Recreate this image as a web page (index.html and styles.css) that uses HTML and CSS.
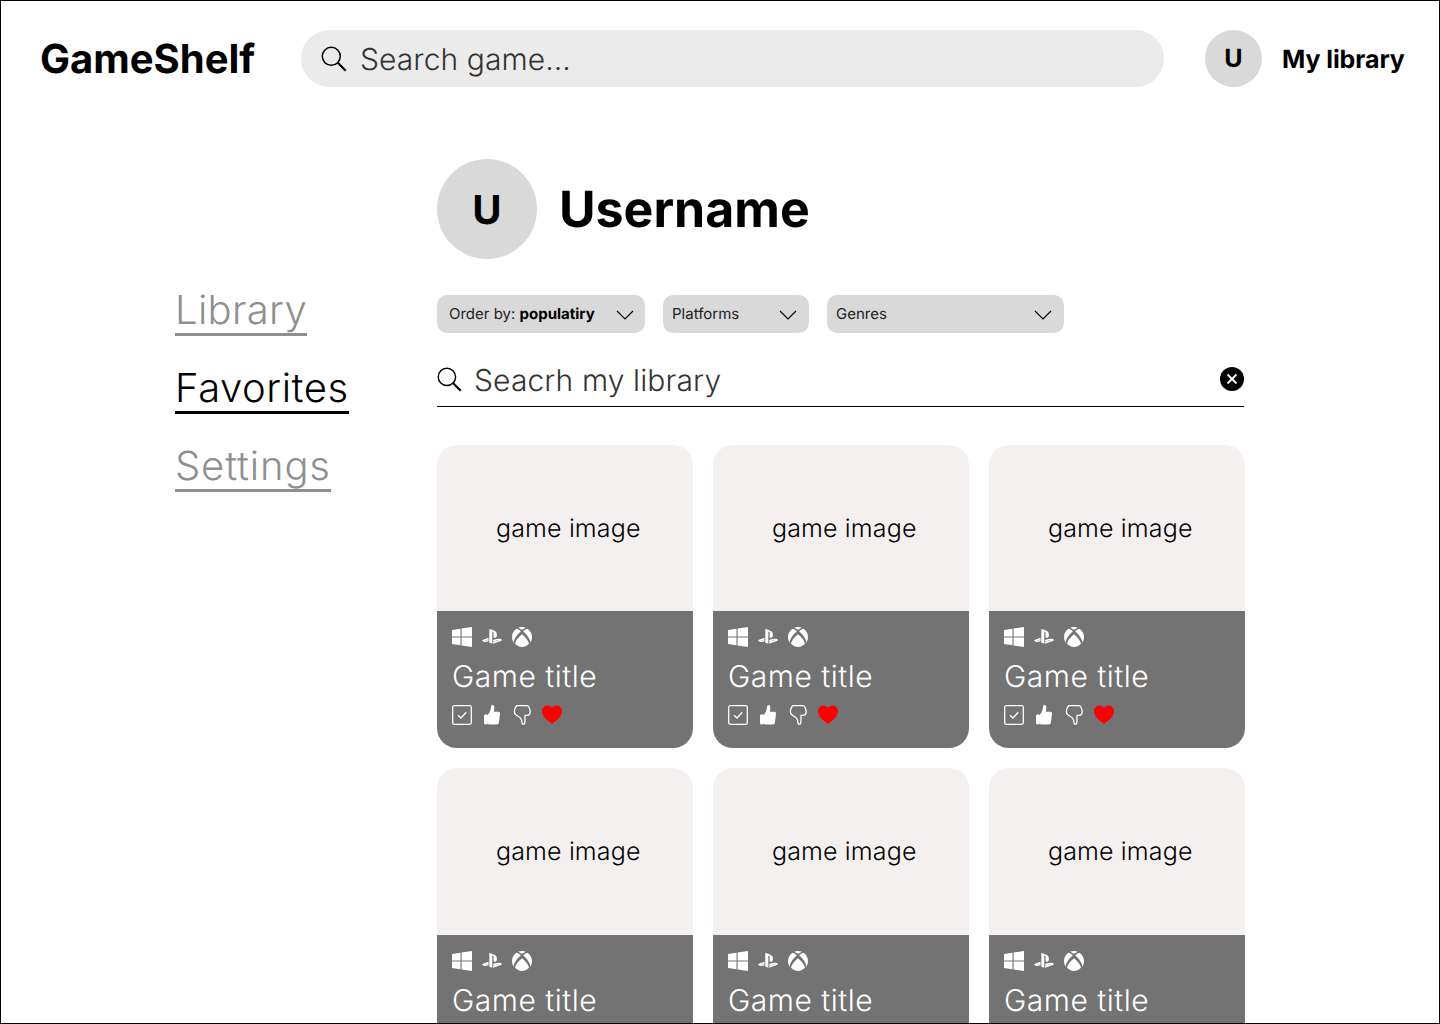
FILE: index.html
```html
<!DOCTYPE html>
<html lang="en">
<head>
<meta charset="utf-8">
<title>GameShelf</title>
<link rel="stylesheet" href="styles.css">
</head>
<body>
<svg class="defs" width="0" height="0" aria-hidden="true">
  <defs>
    <symbol id="i-search" viewBox="0 0 26 26"><circle cx="10.300" cy="10.300" r="9" fill="none" stroke="currentColor" stroke-width="1.500"/><path d="M16.800 16.800 24.700 24.700" fill="none" stroke="currentColor" stroke-width="2.200"/></symbol>
    <symbol id="i-chev" viewBox="0 0 18 10"><path d="M1 1 9 9 17 1" fill="none" stroke="currentColor" stroke-width="1.100"/></symbol>
    <symbol id="i-win" viewBox="0 0 20 20"><path d="M0 3 8.500 1.700V9.400H0ZM9.600 1.500 20 0V9.400H9.600ZM0 10.600H8.500V18.300L0 17ZM9.600 10.600H20V20L9.600 18.500Z" fill="#fff"/></symbol>
    <symbol id="i-ps" viewBox="0 0 20 20"><path d="M7.300 1.800V15.800L10.300 16.800V5.200C10.300 4.600 10.600 4.300 11 4.400 11.500 4.600 11.600 5.100 11.600 5.600V10.400C13.500 11.300 14.900 10.400 14.900 7.900 14.900 5.300 14 4.200 11.700 3.400 10.500 3 8.600 2.300 7.300 1.800ZM6.500 10.800 1.600 12.600C0 13.200-.2 14.200 1.100 14.600 2.400 15.100 4.100 15.100 6.500 14.300V12.800L3.700 13.800C3.200 14 2.900 13.700 3.400 13.500L6.500 12.400ZM11.200 13.100V14.700L15.900 13C16.400 12.800 16.700 13.100 16.200 13.300L11.200 15.100V16.700L18.800 14C20.400 13.400 20.200 12.500 18.700 12.100 16.500 11.500 13.800 12.100 11.200 13.100Z" fill="#fff"/></symbol>
    <symbol id="i-xbox" viewBox="0 0 20 20"><path d="M10 2.700C8.700 1.900 7.400 1.400 6.200.8 7.300.3 8.600 0 10 0S12.700.3 13.800.8C12.600 1.400 11.300 1.900 10 2.700ZM4.600 1.700C6.300 2.100 7.700 3.300 8.900 4.300 6.200 6.600 3.400 9.900 2.100 13.200 1.700 15 1.800 15.800 2.200 16.300.8 14.600 0 12.400 0 10 0 6.700 1.800 3.500 4.600 1.700ZM15.400 1.700C18.200 3.500 20 6.700 20 10 20 12.400 19.200 14.600 17.800 16.300 18.200 15.800 18.300 15 17.900 13.200 16.600 9.900 13.800 6.600 11.100 4.300 12.300 3.300 13.700 2.100 15.400 1.700ZM10 7.300C12.900 9.500 16.700 14 17 16.800 15.200 18.800 12.700 20 10 20S4.800 18.800 3 16.800C3.300 14 7.100 9.500 10 7.300Z" fill="#fff"/></symbol>
    <symbol id="i-check" viewBox="0 0 20 20"><rect x=".7" y=".7" width="18.600" height="18.600" rx="1.500" fill="none" stroke="#fff" stroke-width="1.300"/><path d="M6 10.200 9 13 14.200 7.200" fill="none" stroke="#fff" stroke-width="1.300"/></symbol>
    <symbol id="i-up" viewBox="0 0 20 20"><path d="M10.500 0C11.900 0 12.500 1.300 12.300 3L11.900 6.800H16.200C17.500 6.800 18.200 7.800 18 9L16.900 17.500C16.700 18.800 15.900 19.500 14.700 19.500H7.300C6.500 19.500 6 19.300 5.500 18.800 5 19.200 4.500 19.500 3.800 19.500 2.700 19.500 2 18.800 2 17.700V11.300C2 10 2.700 9.300 3.900 9.300 4.600 9.300 5.200 9.600 5.600 10.100 7 8.500 8.300 6.500 8.700 3.800 8.900 1.700 9.200 0 10.500 0Z" fill="#fff"/></symbol>
    <symbol id="i-down" viewBox="0 0 20 20"><path d="M5 .7H14.900C15.900.7 16.400 1.200 16.800 2 17.300 2.900 18.200 4.500 18.200 6.400 18.200 9 16.800 10.300 14.600 10.300H13L12.900 17.500C12.900 18.700 12.200 19.300 11.300 19.300 10.400 19.300 9.900 18.700 9.900 17.500 9.900 14.300 8.500 12.600 6.500 11.500 4 10.300 2.400 9 2.400 6.400 2.400 4.900 3.500 1.400 5 .7Z" fill="none" stroke="#fff" stroke-width="1.300"/></symbol>
    <symbol id="i-heart" viewBox="0 0 20 20"><path d="M10 18.800C7 16.600 0 12 0 6.200 0 2.900 2.400.4 5.400.4 7.300.4 9 1.400 10 3 11 1.400 12.700.4 14.600.4 17.600.4 20 2.900 20 6.200 20 12 13 16.600 10 18.800Z" fill="#f00"/></symbol>
  </defs>
</svg>
<div class="frame">
  <header class="topbar">
    <div class="logo">GameShelf</div>
    <div class="global-search">
      <svg class="icon-search"><use href="#i-search"/></svg>
      <span class="global-search-text">Search game...</span>
    </div>
    <div class="avatar avatar-small">U</div>
    <div class="library-link">My library</div>
  </header>

  <div class="layout">
    <nav class="sidenav">
      <a class="nav-item nav-library">Library</a>
      <a class="nav-item nav-active">Favorites</a>
      <a class="nav-item nav-settings">Settings</a>
    </nav>

    <main class="content">
      <section class="profile">
        <div class="avatar avatar-large">U</div>
        <h1 class="username">Username</h1>
      </section>

      <section class="filters">
        <div class="filter filter-order"><span>Order by: <b>populatiry</b></span><svg class="chev"><use href="#i-chev"/></svg></div>
        <div class="filter filter-platforms"><span>Platforms</span><svg class="chev"><use href="#i-chev"/></svg></div>
        <div class="filter filter-genres"><span>Genres</span><svg class="chev"><use href="#i-chev"/></svg></div>
      </section>

      <section class="library-search">
        <svg class="icon-search"><use href="#i-search"/></svg>
        <span class="library-search-text">Seacrh my library</span>
        <svg class="clear" viewBox="0 0 24 24"><circle cx="12" cy="12" r="12" fill="#000"/><path d="M7.500 7.500 16.500 16.500M16.500 7.500 7.500 16.500" stroke="#fff" stroke-width="1.800"/></svg>
      </section>

      <section class="grid">
        <article class="card">
          <div class="card-image"><span>game image</span></div>
          <div class="card-body">
            <div class="icons"><svg><use href="#i-win"/></svg><svg><use href="#i-ps"/></svg><svg><use href="#i-xbox"/></svg></div>
            <div class="card-title">Game title</div>
            <div class="icons"><svg><use href="#i-check"/></svg><svg><use href="#i-up"/></svg><svg><use href="#i-down"/></svg><svg><use href="#i-heart"/></svg></div>
          </div>
        </article>
        <article class="card">
          <div class="card-image"><span>game image</span></div>
          <div class="card-body">
            <div class="icons"><svg><use href="#i-win"/></svg><svg><use href="#i-ps"/></svg><svg><use href="#i-xbox"/></svg></div>
            <div class="card-title">Game title</div>
            <div class="icons"><svg><use href="#i-check"/></svg><svg><use href="#i-up"/></svg><svg><use href="#i-down"/></svg><svg><use href="#i-heart"/></svg></div>
          </div>
        </article>
        <article class="card">
          <div class="card-image"><span>game image</span></div>
          <div class="card-body">
            <div class="icons"><svg><use href="#i-win"/></svg><svg><use href="#i-ps"/></svg><svg><use href="#i-xbox"/></svg></div>
            <div class="card-title">Game title</div>
            <div class="icons"><svg><use href="#i-check"/></svg><svg><use href="#i-up"/></svg><svg><use href="#i-down"/></svg><svg><use href="#i-heart"/></svg></div>
          </div>
        </article>
        <article class="card">
          <div class="card-image"><span>game image</span></div>
          <div class="card-body">
            <div class="icons"><svg><use href="#i-win"/></svg><svg><use href="#i-ps"/></svg><svg><use href="#i-xbox"/></svg></div>
            <div class="card-title">Game title</div>
            <div class="icons"><svg><use href="#i-check"/></svg><svg><use href="#i-up"/></svg><svg><use href="#i-down"/></svg><svg><use href="#i-heart"/></svg></div>
          </div>
        </article>
        <article class="card">
          <div class="card-image"><span>game image</span></div>
          <div class="card-body">
            <div class="icons"><svg><use href="#i-win"/></svg><svg><use href="#i-ps"/></svg><svg><use href="#i-xbox"/></svg></div>
            <div class="card-title">Game title</div>
            <div class="icons"><svg><use href="#i-check"/></svg><svg><use href="#i-up"/></svg><svg><use href="#i-down"/></svg><svg><use href="#i-heart"/></svg></div>
          </div>
        </article>
        <article class="card">
          <div class="card-image"><span>game image</span></div>
          <div class="card-body">
            <div class="icons"><svg><use href="#i-win"/></svg><svg><use href="#i-ps"/></svg><svg><use href="#i-xbox"/></svg></div>
            <div class="card-title">Game title</div>
            <div class="icons"><svg><use href="#i-check"/></svg><svg><use href="#i-up"/></svg><svg><use href="#i-down"/></svg><svg><use href="#i-heart"/></svg></div>
          </div>
        </article>
      </section>
    </main>
  </div>
</div>
</body>
</html>
```
FILE: styles.css
```css
* { box-sizing: border-box; }
html, body { margin: 0; padding: 0; height: 1024px; overflow: hidden; background: #fff; }
body { font-family: Inter, "Liberation Sans", sans-serif; color: #000; text-rendering: geometricPrecision; }
.defs { display: block; height: 0; }
.frame { width: 1440px; height: 1024px; border: 1px solid #000; overflow: hidden; background: #fff; }

.topbar { display: flex; align-items: center; height: 57px; margin-top: 29px; padding-left: 39px; }
.logo { width: 261px; font-size: 40px; font-weight: 700; line-height: 57px; }
.global-search { display: flex; align-items: center; gap: 13px; width: 863px; height: 57px; padding-left: 20px; border-radius: 29px; background: #ebebeb; font-size: 30px; font-weight: 300; color: #333; }
.global-search .icon-search { width: 26px; height: 26px; color: #000; }
.global-search-text { padding-top: 2px; letter-spacing: 0.08px; }
.avatar { display: flex; align-items: center; justify-content: center; border-radius: 50%; background: #d9d9d9; font-weight: 700; }
.avatar-small { width: 57px; height: 57px; margin-left: 41px; font-size: 25px; }
.library-link { margin-left: 20px; padding-top: 2px; font-size: 25px; font-weight: 700; letter-spacing: -0.1px; white-space: nowrap; }

.layout { display: flex; padding-left: 174px; }
.sidenav { display: flex; flex-direction: column; align-items: flex-start; gap: 29px; width: 262px; padding-top: 200px; }
.nav-item { height: 49px; border-bottom: 3px solid #8f8f8f; font-size: 40px; font-weight: 300; line-height: 46px; letter-spacing: 0.55px; color: #8f8f8f; }
.nav-library { letter-spacing: 0.35px; }
.nav-settings { letter-spacing: 0.85px; }
.nav-active { border-bottom-color: #000; color: #000; }

.content { width: 807px; }
.profile { display: flex; align-items: center; gap: 22px; margin-top: 72px; }
.avatar-large { width: 100px; height: 100px; font-size: 40px; }
.username { margin: 0; padding-top: 2px; font-size: 50px; font-weight: 700; }

.filters { display: flex; gap: 18px; margin-top: 36px; }
.filter { display: flex; align-items: center; justify-content: space-between; height: 38px; padding: 0 12px 0 9px; border-radius: 10px; background: #d9d9d9; font-size: 15px; color: #222; }
.filter span { padding-bottom: 2px; }
.filter b { color: #000; }
.filter-order { width: 208px; padding-right: 11px; padding-left: 12px; }
.filter-platforms { width: 146px; }
.filter-genres { width: 237px; }
.chev { width: 18px; height: 10px; margin-top: 1px; color: #000; }

.library-search { display: flex; align-items: center; height: 48px; margin-top: 26px; padding-bottom: 7px; border-bottom: 1px solid #000; }
.library-search .icon-search { width: 25px; height: 25px; color: #000; }
.library-search-text { flex: 1; margin-left: 12px; padding-top: 4px; font-size: 30px; font-weight: 300; letter-spacing: 0.12px; color: #333; }
.clear { width: 24px; height: 24px; }

.grid { display: grid; grid-template-columns: repeat(3, 255.600px); gap: 20px 20.400px; margin-top: 38px; }
.card { height: 303.400px; border-radius: 20px; overflow: hidden; }
.card-image { display: flex; align-items: center; justify-content: center; height: 166.200px; padding: 2px 0 0 7px; background: #f5f0f0; font-size: 25px; font-weight: 300; letter-spacing: 0.15px; }
.card-body { height: 137.200px; padding: 16px 15px 0; background: #737373; color: #fff; }
.icons { display: flex; gap: 10px; height: 20px; }
.icons svg { width: 20px; height: 20px; }
.card-title { height: 48px; margin-top: 4px; margin-bottom: 6px; font-size: 30px; font-weight: 300; line-height: 52px; letter-spacing: 0.5px; }
```
